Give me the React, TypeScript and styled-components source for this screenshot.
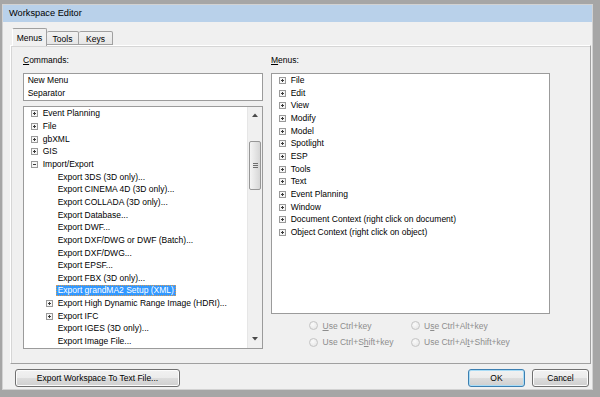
import React from 'react'
import styled, { createGlobalStyle } from 'styled-components'

const GlobalStyle = createGlobalStyle`
  html, body {
    margin: 0;
    padding: 0;
    background: #a6a6a6;
  }
  body {
    font-family: 'Liberation Sans', Arial, sans-serif;
    font-size: 8.5px;
    color: #000;
  }
`

const Frame = styled.div`
  box-sizing: border-box;
  width: 600px;
  height: 397px;
  padding: 4px 7px 7px 2px;
  background: #a6a6a6;
`

const Dialog = styled.div`
  box-sizing: border-box;
  height: 100%;
  border: 1px solid #d2d2d2;
  background: #f0f0f0;
  display: flex;
  flex-direction: column;
`

const TitleBar = styled.div`
  height: 17px;
  line-height: 17px;
  padding-left: 6px;
  background: #b9d1ea;
  font-size: 9.25px;
`

const Body = styled.div`
  flex: 1;
  display: flex;
  flex-direction: column;
  padding: 6px 1px 0 7px;
`

const TabRow = styled.div`
  display: flex;
  align-items: flex-end;
  height: 17px;
  padding-left: 2px;
`

const Tab = styled.div<{ $active?: boolean; $width: number }>`
  position: relative;
  box-sizing: border-box;
  width: ${p => p.$width}px;
  height: ${p => (p.$active ? 18 : 14)}px;
  margin-bottom: ${p => (p.$active ? -1 : 0)}px;
  z-index: ${p => (p.$active ? 1 : 0)};
  display: flex;
  align-items: center;
  justify-content: center;
  border: 1px solid #a0a0a0;
  border-bottom: ${p => (p.$active ? 'none' : '1px solid #a0a0a0')};
  border-left-color: ${p => (p.$active ? '#fff' : '#a0a0a0')};
  border-radius: 2px 2px 0 0;
  background: ${p => (p.$active ? '#f0f0f0' : 'linear-gradient(#f2f2f2, #e6e6e6)')};
  padding-top: ${p => (p.$active ? 0 : 1)}px;
  & + & {
    border-left: none;
  }
`

const Panel = styled.div`
  box-sizing: border-box;
  height: 319px;
  border: 1px solid #a0a0a0;
  border-top-color: #fff;
  border-left-color: #fff;
  box-shadow: 1px 1px 0 #d6d6d6 inset;
  padding: 8px 0 0 12px;
  display: flex;
  gap: 8px;
`

const Column = styled.div<{ $width: number }>`
  width: ${p => p.$width}px;
  display: flex;
  flex-direction: column;
`

const Label = styled.div`
  height: 12.65px;
  line-height: 12.65px;
  margin-bottom: 6px;
`

const ListBox = styled.div<{ $height: number }>`
  box-sizing: border-box;
  height: ${p => p.$height}px;
  border: 1px solid #9b9b9b;
  background: #fff;
  display: flex;
  overflow: hidden;
`

const ListBody = styled.div`
  flex: 1;
  padding-top: 0.7px;
`

const PlainItem = styled.div`
  height: 12.65px;
  line-height: 12.65px;
  padding-left: 3.7px;
  white-space: nowrap;
`

const TreeRow = styled.div<{ $level: number }>`
  display: flex;
  align-items: center;
  height: 12.65px;
  padding-left: ${p => 7 + p.$level * 15}px;
  white-space: nowrap;
`

const ExpanderSlot = styled.span`
  display: inline-flex;
  width: 7px;
  height: 7px;
  margin-right: 4.7px;
  flex: none;
`

const ItemText = styled.span<{ $selected?: boolean }>`
  line-height: 11px;
  padding: 0 2px;
  margin-left: -2px;
  background: ${p => (p.$selected ? '#3399ff' : 'transparent')};
  color: ${p => (p.$selected ? '#fff' : '#000')};
  outline: ${p => (p.$selected ? '1px dotted #d79a55' : 'none')};
  outline-offset: -1px;
`

const ScrollBar = styled.div`
  width: 14px;
  flex: none;
  display: flex;
  flex-direction: column;
  background: #f0f0f0;
  border-left: 1px solid #e6e6e6;
`

const ScrollArrow = styled.div`
  height: 17px;
  display: flex;
  align-items: center;
  justify-content: center;
`

const ScrollTrack = styled.div`
  flex: 1;
  display: flex;
  flex-direction: column;
  align-items: center;
`

const Thumb = styled.div`
  box-sizing: border-box;
  width: 12px;
  height: 49px;
  border: 1px solid #979797;
  border-radius: 2px;
  background: linear-gradient(90deg, #f4f4f4, #e4e4e4 55%, #d6d6d6);
  display: flex;
  align-items: center;
  justify-content: center;
`

const RadioGrid = styled.div`
  display: grid;
  grid-template-columns: 101.5px auto;
  grid-auto-rows: 16.6px;
  margin-top: 3.7px;
  padding-left: 38px;
  color: #8d8d8d;
`

const RadioOption = styled.div`
  display: flex;
  align-items: center;
  gap: 4.5px;
  white-space: nowrap;
`

const RadioCircle = styled.span`
  box-sizing: border-box;
  width: 9px;
  height: 9px;
  border-radius: 50%;
  border: 1px solid #c4c4c4;
  background: radial-gradient(circle at 40% 35%, #fafafa, #e3e3e3);
`

const Footer = styled.div`
  display: flex;
  align-items: center;
  margin-top: 5px;
  padding: 0 2px 0 5px;
  gap: 7px;
`

const Button = styled.button<{ $width: number; $default?: boolean }>`
  box-sizing: border-box;
  width: ${p => p.$width}px;
  height: 18px;
  padding: 0;
  font: inherit;
  color: #000;
  border: 1px solid ${p => (p.$default ? '#3c7fb1' : '#707070')};
  border-radius: 3px;
  background: linear-gradient(#f2f2f2 0%, #ebebeb 50%, #dddddd 50%, #cfcfcf 100%);
  box-shadow: ${p => (p.$default ? 'inset 0 0 0 1px #a9dcf6' : 'inset 0 0 0 1px #fcfcfc')};
`

const Spacer = styled.div`
  flex: 1;
`

type Expand = 'plus' | 'minus' | undefined

interface TreeItem {
  label: string
  level: number
  expand?: Expand
  selected?: boolean
}

const commandItems: TreeItem[] = [
  { label: 'Event Planning', level: 0, expand: 'plus' },
  { label: 'File', level: 0, expand: 'plus' },
  { label: 'gbXML', level: 0, expand: 'plus' },
  { label: 'GIS', level: 0, expand: 'plus' },
  { label: 'Import/Export', level: 0, expand: 'minus' },
  { label: 'Export 3DS (3D only)...', level: 1 },
  { label: 'Export CINEMA 4D (3D only)...', level: 1 },
  { label: 'Export COLLADA (3D only)...', level: 1 },
  { label: 'Export Database...', level: 1 },
  { label: 'Export DWF...', level: 1 },
  { label: 'Export DXF/DWG or DWF (Batch)...', level: 1 },
  { label: 'Export DXF/DWG...', level: 1 },
  { label: 'Export EPSF...', level: 1 },
  { label: 'Export FBX (3D only)...', level: 1 },
  { label: 'Export grandMA2 Setup (XML)', level: 1, selected: true },
  { label: 'Export High Dynamic Range Image (HDRI)...', level: 1, expand: 'plus' },
  { label: 'Export IFC', level: 1, expand: 'plus' },
  { label: 'Export IGES (3D only)...', level: 1 },
  { label: 'Export Image File...', level: 1 },
]

const menuItems = [
  'File',
  'Edit',
  'View',
  'Modify',
  'Model',
  'Spotlight',
  'ESP',
  'Tools',
  'Text',
  'Event Planning',
  'Window',
  'Document Context (right click on document)',
  'Object Context (right click on object)',
]

const ExpandBox: React.FC<{ kind: 'plus' | 'minus' }> = ({ kind }) => (
  <svg width="7" height="7" viewBox="0 0 7 7">
    <rect x="0.5" y="0.5" width="6" height="6" fill="#f6f6f6" stroke="#9a9a9a" />
    <line x1="2" y1="3.5" x2="5" y2="3.5" stroke="#3a3a3a" />
    {kind === 'plus' && <line x1="3.5" y1="2" x2="3.5" y2="5" stroke="#3a3a3a" />}
  </svg>
)

const Arrow: React.FC<{ up?: boolean }> = ({ up }) => (
  <svg width="6" height="4" viewBox="0 0 6 4">
    <polygon points={up ? '0,4 6,4 3,0.5' : '0,0 6,0 3,3.5'} fill="#4a4a4a" />
  </svg>
)

const Grip = () => (
  <svg width="5" height="5" viewBox="0 0 5 5">
    <line x1="0" y1="0.5" x2="5" y2="0.5" stroke="#6e6e6e" />
    <line x1="0" y1="2.5" x2="5" y2="2.5" stroke="#6e6e6e" />
    <line x1="0" y1="4.5" x2="5" y2="4.5" stroke="#6e6e6e" />
  </svg>
)

const Tree: React.FC<{ items: TreeItem[] }> = ({ items }) => (
  <ListBody>
    {items.map(item => (
      <TreeRow key={item.label} $level={item.level}>
        <ExpanderSlot>{item.expand && <ExpandBox kind={item.expand} />}</ExpanderSlot>
        <ItemText $selected={item.selected}>{item.label}</ItemText>
      </TreeRow>
    ))}
  </ListBody>
)

const App: React.FC = () => {
  const thumbOffset = 17

  return (
    <Frame>
      <GlobalStyle />
      <Dialog>
        <TitleBar>Workspace Editor</TitleBar>
        <Body>
          <TabRow>
            <Tab $active $width={35}>Menus</Tab>
            <Tab $width={32}>Tools</Tab>
            <Tab $width={34}>Keys</Tab>
          </TabRow>
          <Panel>
            <Column $width={240}>
              <Label>
                <u>C</u>ommands:
              </Label>
              <ListBox $height={28}>
                <ListBody>
                  <PlainItem>New Menu</PlainItem>
                  <PlainItem>Separator</PlainItem>
                </ListBody>
              </ListBox>
              <ListBox $height={243} style={{ marginTop: 5.35 }}>
                <Tree items={commandItems} />
                <ScrollBar>
                  <ScrollArrow>
                    <Arrow up />
                  </ScrollArrow>
                  <ScrollTrack>
                    <Thumb style={{ marginTop: thumbOffset }}>
                      <Grip />
                    </Thumb>
                  </ScrollTrack>
                  <ScrollArrow>
                    <Arrow />
                  </ScrollArrow>
                </ScrollBar>
              </ListBox>
            </Column>
            <Column $width={279}>
              <Label>
                <u>M</u>enus:
              </Label>
              <ListBox $height={241}>
                <Tree items={menuItems.map(label => ({ label, level: 0, expand: 'plus' }))} />
              </ListBox>
              <RadioGrid>
                <RadioOption>
                  <RadioCircle />
                  <span>
                    <u>U</u>se Ctrl+key
                  </span>
                </RadioOption>
                <RadioOption>
                  <RadioCircle />
                  <span>
                    U<u>s</u>e Ctrl+Alt+key
                  </span>
                </RadioOption>
                <RadioOption>
                  <RadioCircle />
                  <span>
                    Use Ctrl+S<u>h</u>ift+key
                  </span>
                </RadioOption>
                <RadioOption>
                  <RadioCircle />
                  <span>
                    Use Ctrl+Al<u>t</u>+Shift+key
                  </span>
                </RadioOption>
              </RadioGrid>
            </Column>
          </Panel>
          <Footer>
            <Button $width={165}>Export Workspace To Text File...</Button>
            <Spacer />
            <Button $width={57} $default>
              OK
            </Button>
            <Button $width={57}>Cancel</Button>
          </Footer>
        </Body>
      </Dialog>
    </Frame>
  )
}

export default App
